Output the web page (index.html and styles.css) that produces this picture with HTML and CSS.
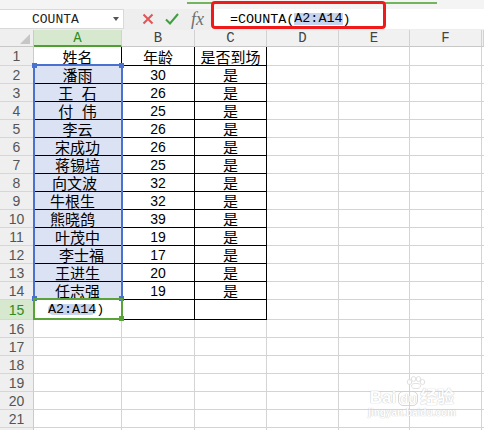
FILE: index.html
```html
<!DOCTYPE html>
<html>
<head>
<meta charset="utf-8">
<link rel="stylesheet" href="styles.css">
</head>
<body>
<div class="app">
  <div class="toolbar">
    <div class="strip"><div class="tabline"></div></div>
    <div class="bar">
      <div class="namebox"><span>COUNTA</span><i class="caret"></i></div>
      <div class="icons">
        <svg class="ic-x" width="12" height="12" viewBox="0 0 12 12"><path d="M1.5 1.5 L10.5 10.5 M10.5 1.5 L1.5 10.5" stroke="#e05555" stroke-width="2" fill="none"/></svg>
        <svg class="ic-ok" width="14" height="12" viewBox="0 0 14 12"><path d="M1 6.5 L5 10.5 L13 1" stroke="#3f9e3f" stroke-width="2" fill="none"/></svg>
        <span class="fx">fx</span>
      </div>
      <div class="input">=COUNTA(<span class="fref">A2:A14</span>)</div>
    </div>
    <div class="redbox"></div>
  </div>

  <div class="sheet">
    <div class="grid">
      <div class="corner"><i class="tri"></i></div>
      <div class="ch on">A</div><div class="ch">B</div><div class="ch">C</div><div class="ch">D</div><div class="ch">E</div><div class="ch">F</div><div class="ch x"></div>

      <div class="rh">1</div><div class="c t cj">姓名</div><div class="c t cj">年龄</div><div class="c t cj">是否到场</div><div class="c"></div><div class="c"></div><div class="c"></div><div class="c x"></div>

      <div class="rh">2</div><div class="c t sel cj">潘雨</div><div class="c t num">30</div><div class="c t cj">是</div><div class="c"></div><div class="c"></div><div class="c"></div><div class="c x"></div>
      <div class="rh">3</div><div class="c t sel cj wide">王 石</div><div class="c t num">26</div><div class="c t cj">是</div><div class="c"></div><div class="c"></div><div class="c"></div><div class="c x"></div>
      <div class="rh">4</div><div class="c t sel cj wide">付 伟</div><div class="c t num">25</div><div class="c t cj">是</div><div class="c"></div><div class="c"></div><div class="c"></div><div class="c x"></div>
      <div class="rh">5</div><div class="c t sel cj">李云</div><div class="c t num">26</div><div class="c t cj">是</div><div class="c"></div><div class="c"></div><div class="c"></div><div class="c x"></div>
      <div class="rh">6</div><div class="c t sel cj">宋成功</div><div class="c t num">26</div><div class="c t cj">是</div><div class="c"></div><div class="c"></div><div class="c"></div><div class="c x"></div>
      <div class="rh">7</div><div class="c t sel cj">蒋锡培</div><div class="c t num">25</div><div class="c t cj">是</div><div class="c"></div><div class="c"></div><div class="c"></div><div class="c x"></div>
      <div class="rh">8</div><div class="c t sel cj l3">向文波</div><div class="c t num">32</div><div class="c t cj">是</div><div class="c"></div><div class="c"></div><div class="c"></div><div class="c x"></div>
      <div class="rh">9</div><div class="c t sel cj l5">牛根生</div><div class="c t num">32</div><div class="c t cj">是</div><div class="c"></div><div class="c"></div><div class="c"></div><div class="c x"></div>
      <div class="rh">10</div><div class="c t sel cj l5">熊晓鸽</div><div class="c t num">39</div><div class="c t cj">是</div><div class="c"></div><div class="c"></div><div class="c"></div><div class="c x"></div>
      <div class="rh">11</div><div class="c t sel cj">叶茂中</div><div class="c t num">19</div><div class="c t cj">是</div><div class="c"></div><div class="c"></div><div class="c"></div><div class="c x"></div>
      <div class="rh">12</div><div class="c t sel cj r4">李士福</div><div class="c t num">17</div><div class="c t cj">是</div><div class="c"></div><div class="c"></div><div class="c"></div><div class="c x"></div>
      <div class="rh">13</div><div class="c t sel cj">王进生</div><div class="c t num">20</div><div class="c t cj">是</div><div class="c"></div><div class="c"></div><div class="c"></div><div class="c x"></div>
      <div class="rh">14</div><div class="c t sel cj">任志强</div><div class="c t num">19</div><div class="c t cj">是</div><div class="c"></div><div class="c"></div><div class="c"></div><div class="c x"></div>

      <div class="rh on">15</div><div class="c t edit"><span class="ref">A2:A14</span>)</div><div class="c t"></div><div class="c t"></div><div class="c"></div><div class="c"></div><div class="c"></div><div class="c x"></div>

      <div class="rh">16</div><div class="c"></div><div class="c"></div><div class="c"></div><div class="c"></div><div class="c"></div><div class="c"></div><div class="c x"></div>
      <div class="rh">17</div><div class="c"></div><div class="c"></div><div class="c"></div><div class="c"></div><div class="c"></div><div class="c"></div><div class="c x"></div>
      <div class="rh">18</div><div class="c"></div><div class="c"></div><div class="c"></div><div class="c"></div><div class="c"></div><div class="c"></div><div class="c x"></div>
      <div class="rh">19</div><div class="c"></div><div class="c"></div><div class="c"></div><div class="c"></div><div class="c"></div><div class="c"></div><div class="c x"></div>
      <div class="rh">20</div><div class="c"></div><div class="c"></div><div class="c"></div><div class="c"></div><div class="c"></div><div class="c"></div><div class="c x"></div>
      <div class="rh">21</div><div class="c"></div><div class="c"></div><div class="c"></div><div class="c"></div><div class="c"></div><div class="c"></div><div class="c x"></div>
      <div class="rh"></div><div class="c"></div><div class="c"></div><div class="c"></div><div class="c"></div><div class="c"></div><div class="c"></div><div class="c x"></div>
    </div>

    <div class="selbox">
      <i class="h htl"></i><i class="h htr"></i><i class="h hbl"></i><i class="h hbr"></i>
    </div>
    <div class="active"><i class="gh"></i></div>
  </div>

  <div class="wm">
    <svg class="paw" width="22" height="13" viewBox="0 0 22 13">
      <g fill="#fff" stroke="#dcdcdc" stroke-width="1">
        <ellipse cx="4.5" cy="6" rx="2.2" ry="2.6"/>
        <ellipse cx="8.5" cy="3" rx="2.2" ry="2.5"/>
        <ellipse cx="13.5" cy="3" rx="2.2" ry="2.5"/>
        <ellipse cx="17.5" cy="6" rx="2.2" ry="2.6"/>
        <ellipse cx="11" cy="10" rx="4.5" ry="2.6"/>
      </g>
    </svg>
    <div class="wm1">Bai<span class="du">du</span>经验</div>
    <div class="wm2">jingyan.baidu.com</div>
  </div>
</div>
</body>
</html>
```
FILE: styles.css
```css
* { box-sizing: border-box; margin: 0; padding: 0; }
html, body { width: 484px; height: 430px; overflow: hidden; background: #fff; }
body { font-family: "Liberation Sans", "Noto Sans CJK SC", sans-serif; color: #000; }
.app { position: relative; width: 484px; height: 430px; }

/* toolbar */
.toolbar { position: relative; height: 30px; background: #eeeeee; display: flex; flex-direction: column; }
.strip { height: 9px; background: #f4f4f4; display: flex; }
.tabline { margin-left: 187px; margin-top: 2px; width: 250px; height: 2px; background: #73b55e; }
.bar { height: 21px; display: flex; }
.namebox { width: 124px; height: 20px; background: #fff; border: 1px solid #d9d9d9; border-left: none; display: flex; align-items: center; padding-left: 32px; font-family: "Liberation Mono", monospace; font-size: 13px; color: #222; }
.caret { margin-left: auto; margin-right: 4px; width: 0; height: 0; border-left: 3px solid transparent; border-right: 3px solid transparent; border-top: 4px solid #555; }
.icons { width: 87px; display: flex; align-items: center; padding-left: 18px; padding-bottom: 2px; }
.ic-x { margin-top: 1px; }
.ic-ok { margin-left: 11px; margin-top: 1px; }
.fx { margin-left: 12px; font-family: "Liberation Serif", serif; font-style: italic; font-size: 18px; color: #6e6e6e; line-height: 1; }
.input { flex: 1; height: 20px; background: #fff; padding-left: 19px; display: flex; align-items: center; font-family: "Liberation Mono", monospace; font-size: 13.4px; color: #000; white-space: pre; }
.fref { background: #c6d4ee; line-height: 12px; display: inline-block; }
.redbox { position: absolute; left: 211px; top: 1px; width: 175px; height: 28px; border: 3px solid #f11a1a; border-radius: 4px; }

/* sheet */
.sheet { position: relative; height: 400px; overflow: hidden; }
.grid { display: grid; grid-template-columns: 34px 88px 73px 72px 72px 71px 72px 1fr; grid-template-rows: 17px 19px repeat(13, 18px) 20px repeat(7, 18px); }
.corner { background: #efefef; border-right: 1px solid #cbcbcb; border-bottom: 1px solid #c8c8c8; display: flex; justify-content: flex-end; align-items: flex-end; padding: 0 3px 2px 0; }
.tri { width: 0; height: 0; border-left: 10px solid transparent; border-bottom: 10px solid #c6c6c6; }
.ch { background: #f1f1f1; border-right: 1px solid #d2d2d2; border-bottom: 1px solid #c8c8c8; display: flex; align-items: center; justify-content: center; font-family: "Liberation Mono", monospace; font-size: 14px; color: #444; }
.ch.on { background: #d6e8ce; border-bottom: 2px solid #4f9f35; color: #2f8a1f; }
.rh { background: #efefef; border-right: 1px solid #cbcbcb; border-bottom: 1px solid #d6d6d6; display: flex; align-items: center; justify-content: center; font-size: 14px; color: #555; line-height: 1; }
.rh.on { background: #d6e8ce; color: #2f8a1f; }
.c { border-right: 1px solid #d4d4d4; border-bottom: 1px solid #d4d4d4; display: flex; align-items: center; justify-content: center; line-height: 1; white-space: pre; }
.c.x { border-right: none; }
.c.t { border-right-color: #000; border-bottom-color: #000; }
.sel { background: #dbe2f4; }
.cj { font-family: "Noto Sans CJK SC", sans-serif; font-size: 15px; }
.num { font-size: 14px; }
.wide { word-spacing: 5px; }
.l3 { padding-right: 6px; }
.l5 { padding-right: 10px; }
.r4 { padding-left: 8px; }
.edit { justify-content: flex-start; padding-left: 14px; font-family: "Liberation Mono", monospace; font-size: 13.4px; }
.ref { background: #c6d4ee; border-radius: 5px; line-height: 11px; display: inline-block; }

/* overlays */
.selbox { position: absolute; left: 33px; top: 34px; width: 90px; height: 236px; border: 2px solid #4a70d0; }
.h { position: absolute; width: 5px; height: 5px; background: #4a70d0; }
.htl { left: -3px; top: -3px; }
.htr { right: -3px; top: -3px; }
.hbl { left: -3px; bottom: -3px; }
.hbr { right: -3px; bottom: -3px; }
.active { position: absolute; left: 33px; top: 268px; width: 90px; height: 22px; border: 2px solid #5aa23a; }
.gh { position: absolute; right: -3px; bottom: -3px; width: 5px; height: 5px; background: #5aa23a; }

/* watermark */
.wm { position: absolute; left: 366px; top: 376px; width: 92px; display: flex; flex-direction: column; align-items: center; opacity: 0.85; }
.paw { display: block; margin-left: 8px; }
.wm1 { font-family: "Liberation Sans", "Noto Sans CJK SC", sans-serif; font-size: 17px; font-weight: bold; color: #fff; text-shadow: 0 0 1px #bdbdbd, 0 0 1px #bdbdbd; line-height: 18px; }
.du { display: inline-block; border: 1px solid #d0d0d0; border-radius: 5px; padding: 0 1px; font-size: 13px; line-height: 13px; margin: 0 2px; }
.wm2 { font-size: 10px; font-weight: bold; color: #fff; text-shadow: 0 0 1px #c4c4c4, 0 0 1px #c4c4c4; line-height: 12px; }
```
